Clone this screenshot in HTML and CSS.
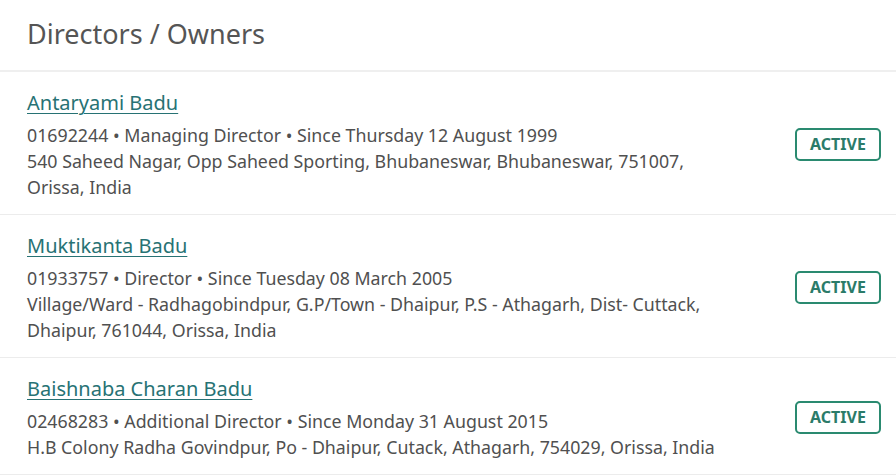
FILE: index.html
```html
<!DOCTYPE html>
<html>
<head>
<meta charset="utf-8">
<link rel="stylesheet" href="styles.css">
</head>
<body>
<div class="card">
  <h2 class="card-title">Directors / Owners</h2>
  <ul class="list">
    <li class="row">
      <div class="info">
        <a class="name" href="#">Antaryami Badu</a>
        <div class="meta">01692244 • Managing Director • Since Thursday 12 August 1999</div>
        <div class="addr">540 Saheed Nagar, Opp Saheed Sporting, Bhubaneswar, Bhubaneswar, 751007, Orissa, India</div>
      </div>
      <span class="badge">ACTIVE</span>
    </li>
    <li class="row">
      <div class="info">
        <a class="name" href="#">Muktikanta Badu</a>
        <div class="meta">01933757 • Director • Since Tuesday 08 March 2005</div>
        <div class="addr">Village/Ward - Radhagobindpur, G.P/Town - Dhaipur, P.S - Athagarh, Dist- Cuttack, Dhaipur, 761044, Orissa, India</div>
      </div>
      <span class="badge">ACTIVE</span>
    </li>
    <li class="row">
      <div class="info">
        <a class="name" href="#">Baishnaba Charan Badu</a>
        <div class="meta">02468283 • Additional Director • Since Monday 31 August 2015</div>
        <div class="addr">H.B Colony Radha Govindpur, Po - Dhaipur, Cutack, Athagarh, 754029, Orissa, India</div>
      </div>
      <span class="badge">ACTIVE</span>
    </li>
  </ul>
</div>
</body>
</html>
```
FILE: styles.css
```css
html, body {
  margin: 0;
  padding: 0;
  background: #fff;
}
body {
  font-family: "Noto Sans", "Open Sans", sans-serif;
  color: #505050;
}
.card {
  width: 896px;
}
.card-title {
  margin: 0;
  padding: 15px 27px 0;
  height: 55px;
  font-size: 27px;
  font-weight: 400;
  line-height: 38px;
  color: #555;
  border-bottom: 2px solid #efefef;
}
.list {
  list-style: none;
  margin: 0;
  padding: 0;
}
.row {
  display: flex;
  align-items: center;
  padding: 17px 15px 14px 27px;
  border-bottom: 1px solid #ececec;
}
.info {
  width: 708px;
  flex: none;
}
.name {
  display: inline-block;
  font-size: 20px;
  line-height: 28px;
  color: #277274;
  text-decoration: underline;
  text-underline-offset: 3px;
  text-decoration-thickness: 1px;
  margin-bottom: 5px;
}
.meta, .addr {
  font-size: 17.8px;
  line-height: 26px;
  color: #505050;
}
.badge {
  margin-left: auto;
  border: 2px solid #2a8a70;
  border-radius: 5px;
  color: #2b7b69;
  font-weight: 700;
  font-size: 16px;
  line-height: 29px;
  width: 82px;
  text-align: center;
}
```
